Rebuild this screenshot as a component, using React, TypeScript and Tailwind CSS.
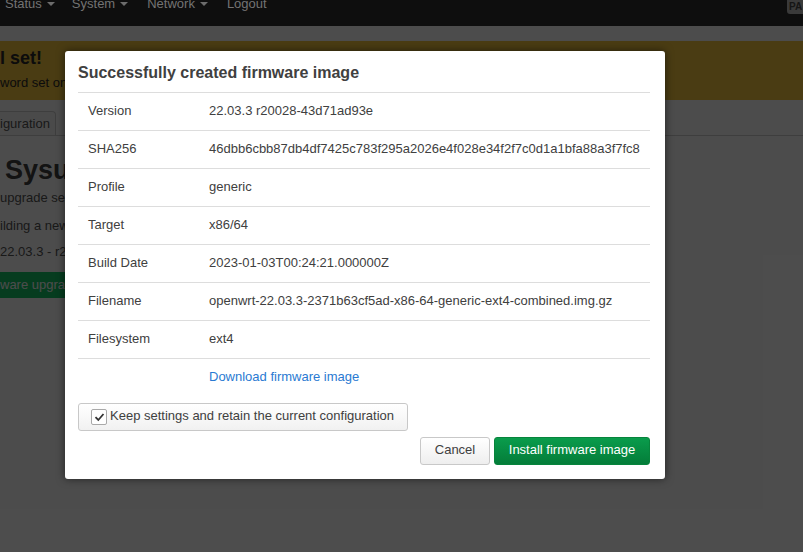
import React from "react";

const rows: [string, string][] = [
  ["Version", "22.03.3 r20028-43d71ad93e"],
  ["SHA256", "46dbb6cbb87db4df7425c783f295a2026e4f028e34f2f7c0d1a1bfa88a3f7fc8"],
  ["Profile", "generic"],
  ["Target", "x86/64"],
  ["Build Date", "2023-01-03T00:24:21.000000Z"],
  ["Filename", "openwrt-22.03.3-2371b63cf5ad-x86-64-generic-ext4-combined.img.gz"],
  ["Filesystem", "ext4"],
];

function Caret() {
  return <span className="ml-[5px] inline-block align-middle border-l-[4px] border-r-[4px] border-t-[4px] border-l-transparent border-r-transparent border-t-[#6c6c6c]" />;
}

export default function App() {
  return (
    <div className="relative w-[803px] h-[552px] overflow-hidden bg-white font-['Liberation_Sans',Arial,sans-serif] text-[13px]">
      {/* navbar (stays above the modal backdrop) */}
      <div className="relative z-20 h-[26px] bg-[#0e0e0e] flex items-start text-[#737373] leading-[13px]">
        <div className="flex -mt-[3px] pl-[5px]">
          <span className="flex items-center">Status<Caret /></span>
          <span className="flex items-center ml-[17px]">System<Caret /></span>
          <span className="flex items-center ml-[19px]">Network<Caret /></span>
          <span className="ml-[19px]">Logout</span>
        </div>
        <div className="ml-auto h-[14px] w-[16px] bg-[#3a3a3a] rounded-bl-[3px] text-[10px] font-bold text-[#151515] leading-[14px] pl-[2px] overflow-hidden">PA</div>
      </div>
      <div className="h-[15px]" />
      {/* alert */}
      <div className="h-[59px] bg-[#f7c840] text-[#2a2a2a]">
        <div className="pt-[6px] text-[18px] font-bold leading-[22px] whitespace-nowrap">l set!</div>
        <div className="mt-[4px] leading-[20px] whitespace-nowrap">word set on</div>
      </div>
      {/* tabs */}
      <div className="h-[36px] border-b border-[#d0d0d0] pt-[11px]">
        <div className="h-[24px] w-[56px] border-t border-r border-[#d0d0d0] rounded-tr-[4px] bg-[#f9f9f9] text-[#555] leading-[23px] whitespace-nowrap overflow-hidden">iguration</div>
      </div>
      {/* content */}
      <div className="text-[#555] whitespace-nowrap">
        <div className="mt-[18px] pl-[5px] text-[27px] font-bold leading-[32px] text-[#404040]">Sysupgrade</div>
        <div className="mt-[2px] leading-[20px]">upgrade server</div>
        <div className="mt-[8px] leading-[20px]">ilding a new</div>
        <div className="mt-[6px] leading-[20px]">22.03.3 - r20028</div>
      </div>
      <div className="mt-[10px] h-[26px] w-[90px] bg-[#16c86a] text-white leading-[26px] whitespace-nowrap overflow-hidden">ware upgrade</div>

      {/* backdrop */}
      <div className="absolute left-0 right-0 top-[26px] bottom-0 z-10 bg-black/70" />

      {/* modal */}
      <div className="absolute z-30 left-[65px] top-[51px] w-[600px] h-[428px] bg-white rounded-[3px] shadow-[0_0_8px_rgba(0,0,0,0.55)] px-[13px] pt-[11px] text-[#404040]">
        <div className="text-[16px] font-bold leading-[22px] text-[#404040]">Successfully created firmware image</div>
        <div className="mt-[8px] w-[572px]">
          {rows.map(([k, v]) => (
            <div key={k} className="flex h-[38px] items-center pb-[2px] border-t border-[#dddddd]">
              <div className="w-[121px] pl-[10px] shrink-0">{k}</div>
              <div className="pl-[10px] whitespace-nowrap">{v}</div>
            </div>
          ))}
          <div className="flex h-[38px] items-center pb-[2px] border-t border-[#dddddd]">
            <div className="w-[121px] shrink-0" />
            <div className="pl-[10px] text-[#2a7ad2]">Download firmware image</div>
          </div>
        </div>
        <div className="mt-[7px] w-[330px] h-[28px] border border-[#c8c8c8] rounded-[3px] bg-gradient-to-b from-white to-[#f1f1f1] flex items-center pl-[12px]">
          <span className="w-[16px] h-[16px] border border-[#a9a9a9] rounded-[2px] bg-white flex items-center justify-center">
            <svg width="11" height="10" viewBox="0 0 11 10">
              <path d="M1.5 5.2 L4.3 8 L9.5 2" fill="none" stroke="#333" strokeWidth="1.8" />
            </svg>
          </span>
          <span className="ml-[3px] leading-[18px] mb-[3px]">Keep settings and retain the current configuration</span>
        </div>
        <div className="mt-[6px] flex justify-end gap-[4px] w-[572px]">
          <div className="w-[70px] h-[28px] pb-[3px] border border-[#c8c8c8] rounded-[3px] bg-gradient-to-b from-white to-[#eeeeee] flex items-center justify-center text-[#404040]">Cancel</div>
          <div className="w-[156px] h-[28px] pb-[3px] border border-[#07843c] rounded-[3px] bg-gradient-to-b from-[#0a9c4c] to-[#047d39] flex items-center justify-center text-white">Install firmware image</div>
        </div>
      </div>
    </div>
  );
}
